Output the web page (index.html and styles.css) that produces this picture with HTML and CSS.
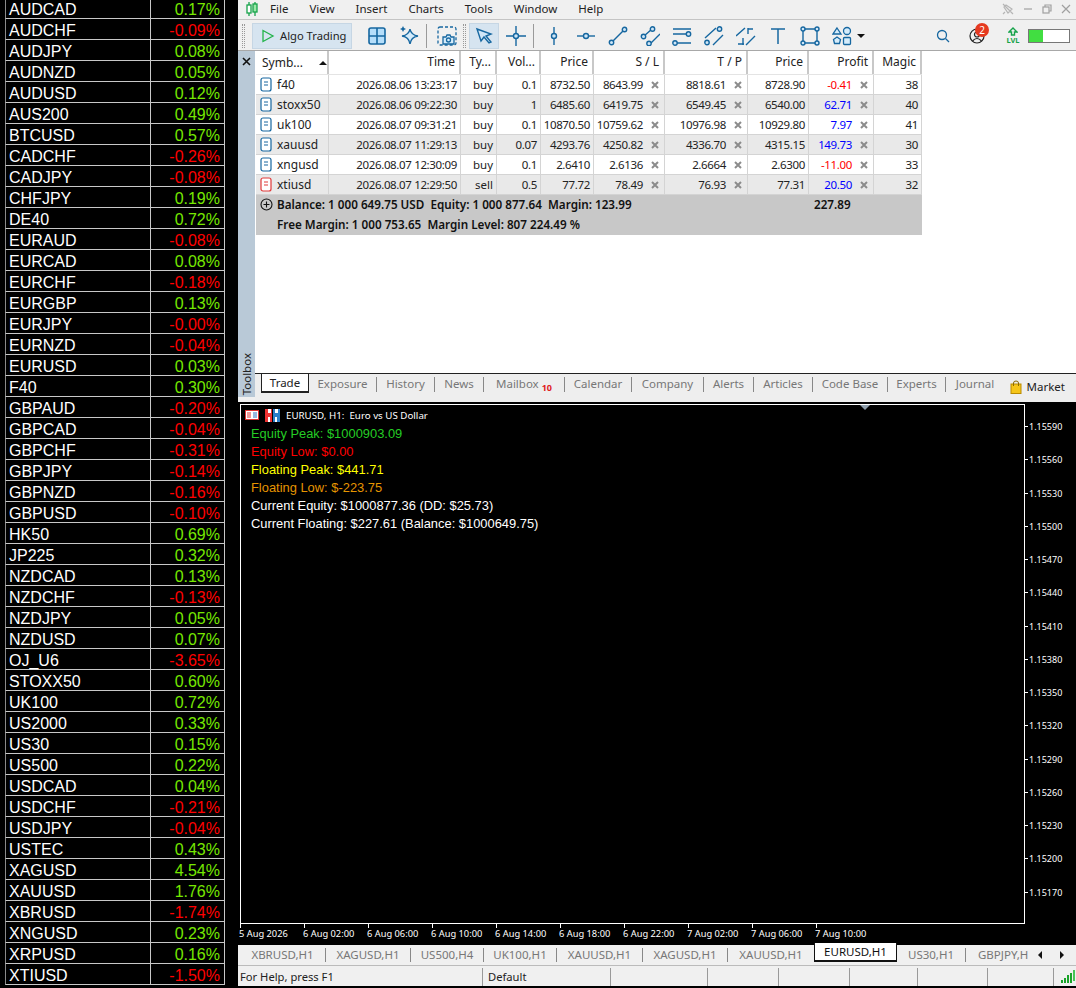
FILE: index.html
```html
<!DOCTYPE html>
<html lang="en">
<head>
  <meta charset="UTF-8">
  <title>Trading terminal</title>
  <link rel="stylesheet" href="styles.css">
</head>
<body>
  <svg class="defs" width="0" height="0">
    <symbol id="doc" viewBox="0 0 12 15"><rect x="1" y="1" width="10" height="13" rx="2" fill="#fff" stroke="currentColor" stroke-width="1.2"/><path d="M4 5h4M4 8h4" stroke="currentColor" stroke-width="1.2"/></symbol>
    <symbol id="cross" viewBox="0 0 8 8"><path d="M1 1l6 6M7 1l-6 6" stroke="#8c8c8c" stroke-width="2"/></symbol>
  </svg>

  <aside class="watch">
    <div class="q"><span>AUDCAD</span><b class="up">0.17%</b></div>
    <div class="q"><span>AUDCHF</span><b class="dn">-0.09%</b></div>
    <div class="q"><span>AUDJPY</span><b class="up">0.08%</b></div>
    <div class="q"><span>AUDNZD</span><b class="up">0.05%</b></div>
    <div class="q"><span>AUDUSD</span><b class="up">0.12%</b></div>
    <div class="q"><span>AUS200</span><b class="up">0.49%</b></div>
    <div class="q"><span>BTCUSD</span><b class="up">0.57%</b></div>
    <div class="q"><span>CADCHF</span><b class="dn">-0.26%</b></div>
    <div class="q"><span>CADJPY</span><b class="dn">-0.08%</b></div>
    <div class="q"><span>CHFJPY</span><b class="up">0.19%</b></div>
    <div class="q"><span>DE40</span><b class="up">0.72%</b></div>
    <div class="q"><span>EURAUD</span><b class="dn">-0.08%</b></div>
    <div class="q"><span>EURCAD</span><b class="up">0.08%</b></div>
    <div class="q"><span>EURCHF</span><b class="dn">-0.18%</b></div>
    <div class="q"><span>EURGBP</span><b class="up">0.13%</b></div>
    <div class="q"><span>EURJPY</span><b class="dn">-0.00%</b></div>
    <div class="q"><span>EURNZD</span><b class="dn">-0.04%</b></div>
    <div class="q"><span>EURUSD</span><b class="up">0.03%</b></div>
    <div class="q"><span>F40</span><b class="up">0.30%</b></div>
    <div class="q"><span>GBPAUD</span><b class="dn">-0.20%</b></div>
    <div class="q"><span>GBPCAD</span><b class="dn">-0.04%</b></div>
    <div class="q"><span>GBPCHF</span><b class="dn">-0.31%</b></div>
    <div class="q"><span>GBPJPY</span><b class="dn">-0.14%</b></div>
    <div class="q"><span>GBPNZD</span><b class="dn">-0.16%</b></div>
    <div class="q"><span>GBPUSD</span><b class="dn">-0.10%</b></div>
    <div class="q"><span>HK50</span><b class="up">0.69%</b></div>
    <div class="q"><span>JP225</span><b class="up">0.32%</b></div>
    <div class="q"><span>NZDCAD</span><b class="up">0.13%</b></div>
    <div class="q"><span>NZDCHF</span><b class="dn">-0.13%</b></div>
    <div class="q"><span>NZDJPY</span><b class="up">0.05%</b></div>
    <div class="q"><span>NZDUSD</span><b class="up">0.07%</b></div>
    <div class="q"><span>OJ_U6</span><b class="dn">-3.65%</b></div>
    <div class="q"><span>STOXX50</span><b class="up">0.60%</b></div>
    <div class="q"><span>UK100</span><b class="up">0.72%</b></div>
    <div class="q"><span>US2000</span><b class="up">0.33%</b></div>
    <div class="q"><span>US30</span><b class="up">0.15%</b></div>
    <div class="q"><span>US500</span><b class="up">0.22%</b></div>
    <div class="q"><span>USDCAD</span><b class="up">0.04%</b></div>
    <div class="q"><span>USDCHF</span><b class="dn">-0.21%</b></div>
    <div class="q"><span>USDJPY</span><b class="dn">-0.04%</b></div>
    <div class="q"><span>USTEC</span><b class="up">0.43%</b></div>
    <div class="q"><span>XAGUSD</span><b class="up">4.54%</b></div>
    <div class="q"><span>XAUUSD</span><b class="up">1.76%</b></div>
    <div class="q"><span>XBRUSD</span><b class="dn">-1.74%</b></div>
    <div class="q"><span>XNGUSD</span><b class="up">0.23%</b></div>
    <div class="q"><span>XRPUSD</span><b class="up">0.16%</b></div>
    <div class="q"><span>XTIUSD</span><b class="dn">-1.50%</b></div>
  </aside>

  <div class="window">
    <nav class="menu">
      <svg class="logo" width="12" height="16" viewBox="0 0 12 16" fill="none" stroke="#16a34a" stroke-width="1.3"><path d="M3 1v14M9 1v14"/><rect x="1" y="4" width="4" height="8" fill="#fff"/><rect x="7" y="3" width="4" height="8" fill="#9be8a8"/></svg>
      <a>File</a><a>View</a><a>Insert</a><a>Charts</a><a>Tools</a><a>Window</a><a>Help</a>
      <div class="win-btns">
        <svg width="12" height="12" viewBox="0 0 12 12" fill="none" stroke="#b5b5b5" stroke-width="1.2"><path d="M1 1l10 10M4 2l6 4-4 4-4-6zM3 9l-2 2"/></svg>
        <svg width="10" height="12" viewBox="0 0 10 12" stroke="#a0a0a0" stroke-width="1.2"><path d="M1 6h8"/></svg>
        <svg width="10" height="12" viewBox="0 0 10 12" fill="none" stroke="#a0a0a0" stroke-width="1.2"><rect x="1" y="4" width="6" height="6"/><path d="M3 4V2h6v6H7"/></svg>
        <svg width="10" height="12" viewBox="0 0 10 12" stroke="#a0a0a0" stroke-width="1.2"><path d="M1 2l8 8M9 2l-8 8"/></svg>
      </div>
    </nav>

    <div class="toolbar">
      <i class="grip"></i>
      <button class="algo">
        <svg width="14" height="14" viewBox="0 0 14 14" fill="none" stroke="#22b34a" stroke-width="1.3"><path d="M2 1.5l10 5.5-10 5.5z"/></svg>
        Algo Trading
      </button>
      <div class="tool first"><svg width="20" height="20" viewBox="0 0 20 20" fill="#b5defa" stroke="#1667a0" stroke-width="1.6"><rect x="2" y="2" width="16" height="16" rx="2"/><path d="M10 2v16M2 10h16"/></svg></div>
      <div class="tool"><svg width="20" height="20" viewBox="0 0 20 20" fill="#d5ecfb" stroke="#1667a0" stroke-width="1.4"><path d="M11 3q1 6 8 7-7 1-8 8-1-7-8-8 7-1 8-7z"/><path d="M4 0l1 2 2 1-2 1-1 2-1-2-2-1 2-1z" fill="#1667a0" stroke="none"/></svg></div>
      <i class="sep"></i>
      <div class="tool"><svg width="20" height="20" viewBox="0 0 20 20" fill="none" stroke="#1667a0" stroke-width="1.3"><rect x="1" y="1" width="18" height="18" rx="2" stroke-dasharray="3 2"/><path d="M6 18v-7h3l1-2h3l1 2h3v7z" fill="#d5ecfb"/><circle cx="11.500" cy="14" r="2"/></svg></div>
      <i class="grip small"></i>
      <div class="tool on"><svg width="18" height="18" viewBox="0 0 18 18" fill="#cfe6f7" stroke="#1667a0" stroke-width="1.4"><path d="M2 2l14 5-5 2 5 6-2 1-5-6-3 4z"/></svg></div>
      <div class="tool"><svg width="20" height="20" viewBox="0 0 20 20" fill="#cfe6f7" stroke="#1667a0" stroke-width="1.4"><path d="M0 10h20M10 0v20"/><circle cx="10" cy="10" r="2.500"/></svg></div>
      <i class="sep"></i>
      <div class="tool"><svg width="20" height="20" viewBox="0 0 20 20" fill="#cfe6f7" stroke="#1667a0" stroke-width="1.4"><path d="M10 1v18"/><circle cx="10" cy="10" r="2.500"/></svg></div>
      <div class="tool"><svg width="20" height="20" viewBox="0 0 20 20" fill="#cfe6f7" stroke="#1667a0" stroke-width="1.4"><path d="M1 10h18"/><circle cx="10" cy="10" r="2.500"/></svg></div>
      <div class="tool"><svg width="20" height="20" viewBox="0 0 20 20" fill="#cfe6f7" stroke="#1667a0" stroke-width="1.4"><path d="M3 17L17 3"/><circle cx="3.500" cy="16.500" r="2.200"/><circle cx="16.500" cy="3.500" r="2.200"/></svg></div>
      <div class="tool"><svg width="20" height="20" viewBox="0 0 20 20" fill="#cfe6f7" stroke="#1667a0" stroke-width="1.4"><path d="M4 10l8-7M11 17L20 8"/><circle cx="3.500" cy="10.500" r="2.200"/><circle cx="12.500" cy="3" r="2.200"/><circle cx="9" cy="17.500" r="2.200"/></svg></div>
      <div class="tool"><svg width="20" height="20" viewBox="0 0 20 20" fill="#cfe6f7" stroke="#1667a0" stroke-width="1.4"><path d="M1 3h18M1 8h14M5 17h14"/><circle cx="16.500" cy="8" r="2.200"/><circle cx="3" cy="17" r="2.200"/></svg></div>
      <div class="tool"><svg width="20" height="20" viewBox="0 0 20 20" fill="#cfe6f7" stroke="#1667a0" stroke-width="1.4"><path d="M1 12L12 2M9 19L19 9"/><circle cx="15.500" cy="3" r="2.200"/><circle cx="3" cy="16.500" r="2.200"/></svg></div>
      <div class="tool"><svg width="20" height="20" viewBox="0 0 20 20" fill="none" stroke="#1667a0" stroke-width="1.4"><path d="M0 10L9 2M12 2v6M12 3h5M2 18h6M7 12v7M10 19L19 10"/></svg></div>
      <div class="tool"><svg width="20" height="20" viewBox="0 0 20 20" fill="none" stroke="#1667a0" stroke-width="1.5"><path d="M3 3h14M10 3v15"/></svg></div>
      <div class="tool"><svg width="20" height="20" viewBox="0 0 20 20" fill="#cfe6f7" stroke="#1667a0" stroke-width="1.4"><path d="M3 3h14v14H3z" fill="none"/><circle cx="3" cy="3" r="2"/><circle cx="17" cy="3" r="2"/><circle cx="3" cy="17" r="2"/><circle cx="17" cy="17" r="2"/></svg></div>
      <div class="tool"><svg width="20" height="20" viewBox="0 0 20 20" fill="#d5ecfb" stroke="#1667a0" stroke-width="1.3"><path d="M5 2l4 6H1z"/><circle cx="15" cy="5" r="3.500"/><path d="M5 11l3.500 2.500-1 4h-5l-1-4z"/><rect x="11.500" y="11.500" width="7" height="7" rx="1"/></svg></div>
      <i class="caret"></i>
      <div class="tray">
        <svg width="14" height="14" viewBox="0 0 14 14" fill="none" stroke="#1667a0" stroke-width="1.3"><circle cx="6" cy="6" r="4.500"/><path d="M9.500 9.500L13 13"/></svg>
        <div class="account">
          <svg width="16" height="16" viewBox="0 0 16 16" fill="none" stroke="#222" stroke-width="1.2"><circle cx="8" cy="8" r="7"/><circle cx="8" cy="6.500" r="2.500"/><path d="M3.500 13q4.500-5 9 0"/></svg>
          <span class="badge">2</span>
        </div>
        <div class="lvl">
          <svg width="10" height="9" viewBox="0 0 10 9" fill="none" stroke="#16a34a" stroke-width="1.4"><path d="M5 1L1 5h2.500v3h3V5H9z"/></svg>
          <span>LVL</span>
        </div>
        <div class="meter"><div class="meter-fill"></div></div>
      </div>
    </div>

    <section class="toolbox">
      <div class="strip">
        <svg width="9" height="9" viewBox="0 0 9 9" stroke="#111" stroke-width="1.6"><path d="M1 1l7 7M8 1L1 8"/></svg>
        <span class="strip-label">Toolbox</span>
      </div>
      <div class="pane">
        <div class="trades">
          <div class="tr head">
            <div class="td left">Symb...<i class="sort"></i></div>
            <div class="td">Time</div>
            <div class="td">Ty...</div>
            <div class="td">Vol...</div>
            <div class="td">Price</div>
            <div class="td">S / L</div>
            <div class="td">T / P</div>
            <div class="td">Price</div>
            <div class="td">Profit</div>
            <div class="td">Magic</div>
          </div>
          <div class="tr">
            <div class="td left"><svg class="doc"><use href="#doc"/></svg>f40</div>
            <div class="td">2026.08.06 13:23:17</div><div class="td">buy</div><div class="td">0.1</div><div class="td">8732.50</div>
            <div class="td x">8643.99<svg class="del"><use href="#cross"/></svg></div>
            <div class="td x">8818.61<svg class="del"><use href="#cross"/></svg></div>
            <div class="td">8728.90</div>
            <div class="td x loss">-0.41<svg class="del"><use href="#cross"/></svg></div>
            <div class="td">38</div>
          </div>
          <div class="tr alt">
            <div class="td left"><svg class="doc"><use href="#doc"/></svg>stoxx50</div>
            <div class="td">2026.08.06 09:22:30</div><div class="td">buy</div><div class="td">1</div><div class="td">6485.60</div>
            <div class="td x">6419.75<svg class="del"><use href="#cross"/></svg></div>
            <div class="td x">6549.45<svg class="del"><use href="#cross"/></svg></div>
            <div class="td">6540.00</div>
            <div class="td x gain">62.71<svg class="del"><use href="#cross"/></svg></div>
            <div class="td">40</div>
          </div>
          <div class="tr">
            <div class="td left"><svg class="doc"><use href="#doc"/></svg>uk100</div>
            <div class="td">2026.08.07 09:31:21</div><div class="td">buy</div><div class="td">0.1</div><div class="td">10870.50</div>
            <div class="td x">10759.62<svg class="del"><use href="#cross"/></svg></div>
            <div class="td x">10976.98<svg class="del"><use href="#cross"/></svg></div>
            <div class="td">10929.80</div>
            <div class="td x gain">7.97<svg class="del"><use href="#cross"/></svg></div>
            <div class="td">41</div>
          </div>
          <div class="tr alt">
            <div class="td left"><svg class="doc"><use href="#doc"/></svg>xauusd</div>
            <div class="td">2026.08.07 11:29:13</div><div class="td">buy</div><div class="td">0.07</div><div class="td">4293.76</div>
            <div class="td x">4250.82<svg class="del"><use href="#cross"/></svg></div>
            <div class="td x">4336.70<svg class="del"><use href="#cross"/></svg></div>
            <div class="td">4315.15</div>
            <div class="td x gain">149.73<svg class="del"><use href="#cross"/></svg></div>
            <div class="td">30</div>
          </div>
          <div class="tr">
            <div class="td left"><svg class="doc"><use href="#doc"/></svg>xngusd</div>
            <div class="td">2026.08.07 12:30:09</div><div class="td">buy</div><div class="td">0.1</div><div class="td">2.6410</div>
            <div class="td x">2.6136<svg class="del"><use href="#cross"/></svg></div>
            <div class="td x">2.6664<svg class="del"><use href="#cross"/></svg></div>
            <div class="td">2.6300</div>
            <div class="td x loss">-11.00<svg class="del"><use href="#cross"/></svg></div>
            <div class="td">33</div>
          </div>
          <div class="tr alt">
            <div class="td left"><svg class="doc sell"><use href="#doc"/></svg>xtiusd</div>
            <div class="td">2026.08.07 12:29:50</div><div class="td">sell</div><div class="td">0.5</div><div class="td">77.72</div>
            <div class="td x">78.49<svg class="del"><use href="#cross"/></svg></div>
            <div class="td x">76.93<svg class="del"><use href="#cross"/></svg></div>
            <div class="td">77.31</div>
            <div class="td x gain">20.50<svg class="del"><use href="#cross"/></svg></div>
            <div class="td">32</div>
          </div>
          <div class="summary">
            <div class="sum-line">
              <svg class="plus" width="13" height="13" viewBox="0 0 13 13" fill="none" stroke="#111" stroke-width="1.1"><circle cx="6.500" cy="6.500" r="5.500"/><path d="M3.500 6.500h6M6.500 3.500v6"/></svg>
              <span>Balance: 1 000 649.75 USD&nbsp; Equity: 1 000 877.64&nbsp; Margin: 123.99</span>
              <span class="sum-total">227.89</span>
            </div>
            <div class="sum-line"><span class="indent">Free Margin: 1 000 753.65&nbsp; Margin Level: 807 224.49 %</span></div>
          </div>
        </div>
        <div class="tabs">
          <a class="tab active">Trade</a>
          <a class="tab w68">Exposure</a>
          <a class="tab w58">History</a>
          <a class="tab w49">News</a>
          <a class="tab w81">Mailbox <sub>10</sub></a>
          <a class="tab w67">Calendar</a>
          <a class="tab w72">Company</a>
          <a class="tab w50">Alerts</a>
          <a class="tab w59">Articles</a>
          <a class="tab w75">Code Base</a>
          <a class="tab w58">Experts</a>
          <a class="tab w58 last">Journal</a>
          <a class="market">
            <svg width="12" height="14" viewBox="0 0 12 14"><rect x="1" y="4" width="10" height="9.500" fill="#f5c518" stroke="#b98a00"/><path d="M3.500 6V3q0-2 2.500-2t2.500 2v3" fill="none" stroke="#8a6a00"/></svg>
            Market
          </a>
        </div>
      </div>
    </section>

    <section class="chart">
      <div class="chart-row">
        <div class="plot">
          <i class="marker"></i>
          <div class="chart-title">
            <svg width="14" height="10" viewBox="0 0 14 10"><rect x=".5" y=".5" width="13" height="9" fill="#fff" stroke="#d33"/><path d="M2 3h4M2 5h4M2 7h4" stroke="#d33"/><path d="M8 3h4M8 5h4M8 7h4" stroke="#2a6fc0"/></svg>
            <svg width="15" height="13" viewBox="0 0 15 13"><path d="M0 0h7v13H0z" fill="#e33"/><path d="M8 0h7v13H8z" fill="#2a7fc9"/><path d="M3 0h3v4H3zM10 0h3v4h-3zM3 8h2v5H3zM10 8h2v5h-2z" fill="#fff"/></svg>
            <span>EURUSD, H1:&nbsp; Euro vs US Dollar</span>
          </div>
          <div class="stats">
            <div class="s-green">Equity Peak: $1000903.09</div>
            <div class="s-red">Equity Low: $0.00</div>
            <div class="s-yellow">Floating Peak: $441.71</div>
            <div class="s-orange">Floating Low: $-223.75</div>
            <div>Current Equity: $1000877.36 (DD: $25.73)</div>
            <div>Current Floating: $227.61 (Balance: $1000649.75)</div>
          </div>
        </div>
        <div class="prices">
          <div>1.15590</div><div>1.15560</div><div>1.15530</div><div>1.15500</div><div>1.15470</div>
          <div>1.15440</div><div>1.15410</div><div>1.15380</div><div>1.15350</div><div>1.15320</div>
          <div>1.15290</div><div>1.15260</div><div>1.15230</div><div>1.15200</div><div>1.15170</div>
        </div>
      </div>
      <div class="times">
        <div>5 Aug 2026</div><div>6 Aug 02:00</div><div>6 Aug 06:00</div><div>6 Aug 10:00</div><div>6 Aug 14:00</div>
        <div>6 Aug 18:00</div><div>6 Aug 22:00</div><div>7 Aug 02:00</div><div>7 Aug 06:00</div><div>7 Aug 10:00</div>
      </div>
    </section>

    <div class="chart-tabs">
      <a class="ctab w86">XBRUSD,H1</a>
      <a class="ctab w85">XAGUSD,H1</a>
      <a class="ctab w73">US500,H4</a>
      <a class="ctab w73">UK100,H1</a>
      <a class="ctab w86">XAUUSD,H1</a>
      <a class="ctab w85">XAGUSD,H1</a>
      <a class="ctab w86 last">XAUUSD,H1</a>
      <a class="ctab current">EURUSD,H1</a>
      <a class="ctab w69">US30,H1</a>
      <a class="ctab cut">GBPJPY,H</a>
      <div class="arrows"><i class="arrow-l"></i><i class="arrow-r"></i></div>
    </div>

    <footer class="status">
      <div class="cell">For Help, press F1</div>
      <div class="cell prof">Default</div>
      <div class="cell"></div><div class="cell"></div><div class="cell"></div><div class="cell"></div><div class="cell"></div><div class="cell"></div>
      <svg class="signal" width="16" height="16" viewBox="0 0 16 16" fill="#1aa32a"><rect x="1" y="11" width="2" height="3"/><rect x="4" y="9" width="2" height="5"/><rect x="7" y="6" width="2" height="8"/><rect x="10" y="4" width="2" height="10"/><rect x="13" y="1" width="2" height="11" fill="#49c457"/></svg>
    </footer>
  </div>
</body>
</html>
```

FILE: styles.css
```css
* {
  box-sizing: border-box;
}

html, body {
  margin: 0;
  padding: 0;
  height: 988px;
  overflow: hidden;
}

body {
  background-color: #000;
  display: flex;
  font-family: "Noto Sans", sans-serif;
  font-size: 11.5px;
  color: #222;
}

.defs {
  position: absolute;
}

/* watch list on the left */
.watch {
  width: 238px;
  flex: none;
  margin-top: -2px;
  padding-left: 5px;
  font-family: "Liberation Sans", sans-serif;
  font-size: 16px;
  color: #fff;
}

.q {
  width: 220px;
  height: 21px;
  display: grid;
  grid-template-columns: 145px 1fr;
  grid-template-rows: 20px;
  line-height: 24px;
  border-bottom: 1px solid #c8c8c8;
  border-left: 1px solid #8a8a8a;
  border-right: 1px solid #c8c8c8;
}

.q span {
  padding-left: 3px;
  border-right: 1px solid #c8c8c8;
}

.q b {
  font-weight: normal;
  text-align: right;
  padding-right: 4px;
}

.up {
  color: #76e800;
}

.dn {
  color: #ff0000;
}

/* main window */
.window {
  width: 838px;
  height: 986px;
  background-color: #f0f0f0;
  display: flex;
  flex-direction: column;
  border-bottom-left-radius: 6px;
}

.menu {
  height: 19px;
  display: flex;
  align-items: center;
  padding: 0 0 2px 8px;
  color: #222;
}

.logo {
  margin-right: 12px;
}

.menu a {
  margin-right: 21px;
}

.win-btns {
  margin-left: auto;
  display: flex;
  gap: 9px;
  padding-right: 5px;
  align-items: center;
}

.toolbar {
  height: 32px;
  display: flex;
  align-items: center;
  border-top: 1px solid #c4c4c4;
  border-bottom: 1px solid #a8a8a8;
  padding: 1px 0 0 4px;
}

.grip {
  width: 3px;
  height: 24px;
  margin-right: 7px;
  border-left: 1px dotted #999;
  border-right: 1px dotted #999;
}

.grip.small {
  margin: 0 3px 0 0;
}

.algo {
  width: 100px;
  height: 26px;
  display: flex;
  align-items: center;
  gap: 5px;
  padding: 0 0 0 8px;
  background-color: #d6e4f0;
  border: 1px solid #c6d6e4;
  font: inherit;
  font-size: 11.2px;
  color: #222;
}

.tool {
  width: 32px;
  height: 26px;
  flex: none;
  display: flex;
  align-items: center;
  justify-content: center;
}

.tool.first {
  margin-left: 9px;
}

.tool.on {
  width: 30px;
  margin-right: 1px;
  background-color: #d6e4f0;
  border: 1px solid #c6d6e4;
}

.sep {
  width: 1px;
  height: 24px;
  margin: 0 4px 0 1px;
  background-color: #9a9a9a;
}

.caret {
  width: 0;
  height: 0;
  margin-left: -1px;
  border: 4px solid transparent;
  border-top: 4px solid #111;
  border-bottom: 0;
}

.tray {
  margin-left: auto;
  display: flex;
  align-items: center;
  padding-right: 6px;
}

.account {
  position: relative;
  margin-left: 19px;
  width: 16px;
  height: 16px;
}

.badge {
  position: absolute;
  left: 6px;
  top: -5px;
  width: 14px;
  height: 14px;
  border-radius: 50%;
  background-color: #e53a20;
  color: #fff;
  font-size: 10px;
  line-height: 14px;
  text-align: center;
}

.lvl {
  margin-left: 21px;
  width: 14px;
  display: flex;
  flex-direction: column;
  align-items: center;
  color: #16a34a;
  font-size: 7.5px;
  font-weight: bold;
  line-height: 8px;
}

.meter {
  margin-left: 8px;
  width: 42px;
  height: 14px;
  border: 1px solid #777;
  background-color: #fff;
}

.meter-fill {
  width: 14px;
  height: 100%;
  background-color: #41de41;
}

/* toolbox */
.toolbox {
  height: 351px;
  display: flex;
}

.strip {
  width: 17px;
  height: 346px;
  flex: none;
  background-color: #b9c9d7;
  display: flex;
  flex-direction: column;
  align-items: center;
  justify-content: space-between;
  padding: 6px 0 2px;
}

.strip-label {
  writing-mode: vertical-rl;
  transform: rotate(180deg);
  font-size: 11.5px;
}

.pane {
  flex: 1;
  min-width: 0;
  display: flex;
  flex-direction: column;
}

.trades {
  height: 322px;
  flex: none;
  background-color: #fff;
  padding-left: 1px;
}

.tr {
  width: 666px;
  height: 20px;
  display: grid;
  grid-template-columns: 73px 132px 36px 44px 53px 71px 83px 61px 65px 48px;
  border-bottom: 1px solid #d4d4d4;
  line-height: 19px;
}

.tr.alt {
  background-color: #e9e9e9;
}

.tr.head {
  height: 24px;
  line-height: 22px;
  border-bottom: 1px solid #e4e4e4;
  font-size: 12px;
}

.td {
  position: relative;
  text-align: right;
  padding-right: 3px;
  border-right: 1px solid #d4d4d4;
  white-space: nowrap;
}

/* the numbers run narrower than the labels */
.tr:not(.head) .td:not(.left):not(:nth-child(3)) {
  letter-spacing: -0.35px;
}

.head .td {
  padding-right: 4px;
  border-right: 2px solid #c8c8c8;
}

.td.left {
  text-align: left;
  padding: 0 0 0 4px;
  display: flex;
  align-items: center;
  font-size: 12px;
}

.head .td.left {
  padding-left: 6px;
}

.td.x {
  padding-right: 21px;
}

.loss {
  color: #ff0000;
}

.gain {
  color: #0000ff;
}

.doc {
  width: 12px;
  height: 15px;
  margin-right: 5px;
  color: #1667a0;
}

.doc.sell {
  color: #e03a3a;
}

.del {
  position: absolute;
  right: 5px;
  top: 6px;
  width: 8px;
  height: 8px;
}

.sort {
  width: 0;
  height: 0;
  margin-left: 16px;
  border: 4px solid transparent;
  border-bottom: 4px solid #111;
  border-top: 0;
}

.summary {
  width: 666px;
  height: 40px;
  background-color: #c8c8c8;
  color: #111;
  font-size: 11.7px;
  font-weight: 600;
}

.sum-line {
  height: 20px;
  display: flex;
  align-items: center;
  padding: 0 0 2px 4px;
  position: relative;
}

.plus {
  margin-right: 4px;
}

.indent {
  padding-left: 17px;
}

.sum-total {
  position: absolute;
  left: 558px;
}

.tabs {
  height: 29px;
  display: flex;
  align-items: flex-start;
  border-top: 1px solid #222;
  padding-left: 6px;
  background-color: #eee;
  color: #777;
}

.tab {
  height: 15px;
  margin-top: 3px;
  line-height: 13px;
  text-align: center;
  border-right: 1px solid #888;
  flex: none;
}

.tab.active {
  width: 48px;
  height: 19px;
  margin-top: 0;
  line-height: 17px;
  background-color: #fff;
  color: #222;
  border: 1px solid #222;
  border-top: 0;
  border-bottom-width: 2px;
}

.tab sub {
  color: #e02020;
  font-size: 9px;
  font-weight: bold;
  line-height: 0;
}

.tab.last {
  border-right: 0;
}

.w49 { width: 49px; }
.w50 { width: 50px; }
.w58 { width: 58px; }
.w59 { width: 59px; }
.w67 { width: 67px; }
.w68 { width: 68px; }
.w69 { width: 69px; }
.w72 { width: 72px; }
.w73 { width: 73px; }
.w75 { width: 75px; }
.w81 { width: 81px; }
.w85 { width: 85px; }
.w86 { width: 86px; }

.market {
  margin-left: auto;
  margin-top: 5px;
  padding-right: 11px;
  display: flex;
  align-items: center;
  gap: 5px;
  color: #222;
}

/* chart */
.chart {
  height: 543px;
  background-color: #000;
  color: #fff;
  padding: 2px 0 0 2px;
  font-size: 9px;
}

.chart-row {
  display: flex;
}

.plot {
  position: relative;
  width: 785px;
  height: 520px;
  border: 1px solid #fff;
  padding: 4px 0 0 4px;
}

.marker {
  position: absolute;
  left: 619px;
  top: 0;
  width: 0;
  height: 0;
  border: 5px solid transparent;
  border-top: 5px solid #8d9dab;
  border-bottom: 0;
}

.chart-title {
  display: flex;
  align-items: center;
  gap: 6px;
  height: 12px;
  font-size: 9.75px;
}

.stats {
  margin: 4px 0 0 6px;
  font-family: "Liberation Sans", sans-serif;
  font-size: 12.9px;
  line-height: 18px;
}

.s-green {
  color: #25cc25;
}

.s-red {
  color: #ff0000;
}

.s-yellow {
  color: #ffff00;
}

.s-orange {
  color: #e69500;
}

.prices {
  flex: 1;
  padding-top: 6px;
}

.prices div {
  height: 33.25px;
  line-height: 33.25px;
  padding-left: 4px;
  position: relative;
}

.prices div::before {
  content: "";
  position: absolute;
  left: 0;
  top: 16px;
  width: 3px;
  height: 1px;
  background-color: #fff;
}

.times {
  display: flex;
  margin-left: -2px;
  font-size: 9.3px;
}

.times div {
  width: 64px;
  padding: 3px 0 0 1px;
  line-height: 14px;
  position: relative;
  white-space: nowrap;
}

.times div::before {
  content: "";
  position: absolute;
  left: 2px;
  top: 0;
  width: 1px;
  height: 4px;
  background-color: #fff;
}

.chart-tabs {
  height: 21px;
  display: flex;
  align-items: center;
  background-color: #f0f0f0;
  padding-left: 2px;
  color: #777;
  border-bottom: 1px solid #bbb;
}

.ctab {
  height: 14px;
  line-height: 14px;
  flex: none;
  text-align: center;
  border-right: 1px solid #888;
}

.ctab.last {
  border-right: 0;
}

.ctab.current {
  width: 83px;
  height: 19px;
  margin-top: -5px;
  line-height: 17px;
  background-color: #fff;
  color: #111;
  border: 1px solid #111;
  border-top: 0;
  border-bottom-width: 2px;
}

.ctab.cut {
  width: 68px;
  border-right: 0;
  text-align: left;
  padding-left: 12px;
  white-space: nowrap;
}

.arrows {
  flex: 1;
  display: flex;
  justify-content: space-between;
  padding: 0 12px 0 4px;
}

.arrow-l, .arrow-r {
  width: 0;
  height: 0;
  border: 4px solid transparent;
}

.arrow-l {
  border-right: 4px solid #111;
  border-left: 0;
}

.arrow-r {
  border-left: 4px solid #111;
  border-right: 0;
}

.status {
  height: 20px;
  display: grid;
  grid-template-columns: 245px 128px 97px 71px 71px 68px 70px 66px 1fr;
  align-items: center;
  padding-top: 1px;
  font-size: 11.2px;
  background-color: #f0f0f0;
}

.cell {
  height: 18px;
  padding-left: 2px;
  line-height: 18px;
  border-right: 1px solid #999;
}

.cell.prof {
  padding-left: 5px;
}

.signal {
  justify-self: end;
}
```
